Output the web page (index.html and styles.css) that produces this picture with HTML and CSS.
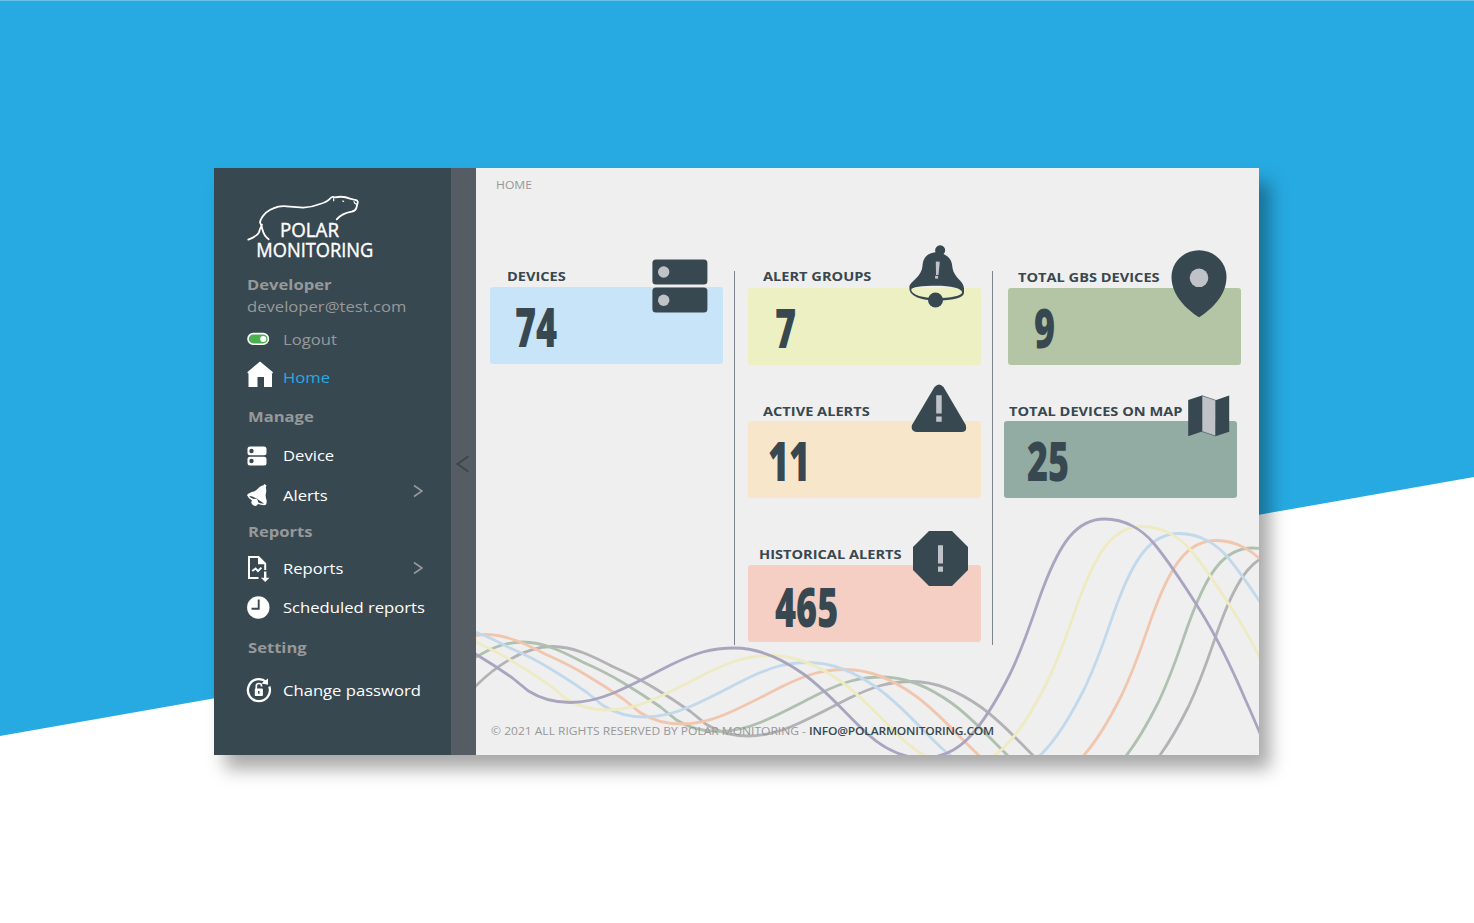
FILE: index.html
```html
<!DOCTYPE html>
<html lang="en">
<head>
<meta charset="utf-8">
<title>Polar Monitoring</title>
<link rel="stylesheet" href="styles.css">
</head>
<body>
<div class="window">
  <aside class="sidebar">
    <svg class="logo" viewBox="0 0 420 225" role="img" aria-label="Polar Monitoring">
      <g fill="none" stroke="#fff" stroke-width="5.4" stroke-linecap="round" stroke-linejoin="round">
        <path d="M25 149Q52 138 57 127Q60 115 66 104M86 148Q72 138 67 118Q66 108 60 97Q62 84 78 68Q90 58 100 55Q118 47 140 49L190 53Q215 52 240 42Q262 36 272 24Q276 18 285 22Q310 17 330 26L346 30Q355 32 353 38L349 54Q347 62 335 65Q306 70 290 88"/>
        <path d="M281 26l0 6M342 35q2 8 9 7M308 33l3 1" stroke-width="3.6"/>
      </g>
      <g class="logo-text" fill="#fff" stroke="#fff" stroke-width="1.2">
        <text x="120" y="141" textLength="177" lengthAdjust="spacingAndGlyphs">POLAR</text>
        <text x="49" y="202" textLength="351" lengthAdjust="spacingAndGlyphs">MONITORING</text>
      </g>
    </svg>
    <div class="row user"><span class="wide bold">Developer</span></div>
    <div class="row email"><span class="wide">developer@test.com</span></div>
    <nav>
      <a class="row logout"><i><svg width="24" height="14" viewBox="0 0 24 14"><rect x="1" y="1.6" width="20.4" height="10.6" rx="5.3" fill="#4caf50" stroke="#fff" stroke-width="1.6"/><circle cx="16.2" cy="6.9" r="3" fill="#fff"/></svg></i><span class="wide">Logout</span></a>
      <a class="row home"><i><svg width="27" height="28" viewBox="0 0 27 28"><path fill="#fff" d="M13 .5L26 11.2 25 13V26H17V16H10.500V26H1.500V13L.3 11.200z"/></svg></i><span class="wide">Home</span></a>
      <div class="row manage"><span class="wide bold">Manage</span></div>
      <a class="row device"><i><svg width="20" height="20" viewBox="0 0 20 20"><g fill="#fff"><rect x=".5" y=".5" width="19" height="8.800" rx="2.500"/><rect x=".5" y="10.700" width="19" height="8.800" rx="2.500"/></g><g fill="#384850"><circle cx="4.500" cy="5" r="2.200"/><circle cx="4.500" cy="15" r="2.200"/></g></svg></i><span class="wide">Device</span></a>
      <a class="row alerts"><i><svg width="22" height="22" viewBox="0 0 22 22"><path fill="#fff" d="M0 11Q2 8.500 7 7.500Q10 6 12 3.500Q14 1.500 16.500 1.300L17.500 0L19.500 1.500L18.800 3.500Q19.600 6 19 9Q18 12 19.600 16Q20 20 18.500 21Q15 21.500 11 20A3 3 0 1 1 5 16.500Q1 14 0 11z"/><path d="M2 12Q6 12 11 15.500Q16 18.500 17 19.700Q13 19.500 11 18.200Q10 15 7 15Q3 13.800 2 12z" fill="#384850"/><circle cx="8" cy="17.700" r="2.900" fill="#fff"/></svg></i><span class="wide">Alerts</span><svg class="chevron" width="10" height="14" viewBox="0 0 10 14"><path d="M1 1.500L9 7L1 12.500"/></svg></a>
      <div class="row reports-title"><span class="wide bold">Reports</span></div>
      <a class="row reports"><i><svg width="24" height="27" viewBox="0 0 24 27"><path d="M11.500 23H2V2H11.500L18.200 8.600V15" fill="none" stroke="#fff" stroke-width="2"/><path d="M11 1.200L19 9.200H11zM17 16.500h2.400v6.200h3.100L18.200 27 13.900 22.700H17z" fill="#fff"/><path d="M5.200 16L8.600 13.500 11 16.200 14.400 12.600" fill="none" stroke="#fff" stroke-width="1.900"/></svg></i><span class="wide">Reports</span><svg class="chevron" width="10" height="14" viewBox="0 0 10 14"><path d="M1 1.500L9 7L1 12.500"/></svg></a>
      <a class="row scheduled"><i><svg width="23" height="23" viewBox="0 0 23 23"><circle cx="11.300" cy="11.500" r="11.200" fill="#fff"/><path d="M11.700 3.500V12.800H4.500" fill="none" stroke="#384850" stroke-width="1.900"/></svg></i><span class="wide">Scheduled reports</span></a>
      <div class="row setting"><span class="wide bold">Setting</span></div>
      <a class="row password"><i><svg width="26" height="26" viewBox="0 0 26 26"><path d="M20.300 5A11 11 0 1 0 23.300 9.500" fill="none" stroke="#fff" stroke-width="2.300"/><path d="M22 1.500V7.700L15.300 6.600z" fill="#fff"/><rect x="8.800" y="11.600" width="8.100" height="7.500" rx=".8" fill="#fff"/><path d="M10.300 12V8.800Q10.300 6.500 12.900 6.500Q15.500 6.500 15.500 8.800V9.500" fill="none" stroke="#fff" stroke-width="1.700"/><path d="M12.800 14v2.700" stroke="#384850" stroke-width="1.500"/></svg></i><span class="wide">Change password</span></a>
    </nav>
  </aside>
  <div class="collapse"><svg width="14" height="18" viewBox="0 0 14 18"><path d="M12.500 1.300L1.500 9L12.500 16.700" fill="none" stroke="#384850" stroke-width="2"/></svg></div>
  <main class="main">
    <svg class="waves" viewBox="475.500 168 783.500 587" aria-hidden="true">
      <defs><path id="wave" d="M290 660C315 633 345 613 374 613C395 613 415 623 434 633Q457 643 475 654Q495 666 512 678L528 691C542 700 556 702.500 570 702.500C588 702.500 601 698 613 693C636 683 652 674 670 665C695 653 710 648 734 648C759 648 782 659 803 674C828 692 844 713 867 734C886 751 903 758 922 758C940 758 955 751 967 739C984 722 997 699 1010 673C1027 637 1034 610 1043 587C1059 545 1075 519 1104 519C1125 519 1142 530 1153 543C1172 566 1186 589 1200 611C1218 640 1233 672 1245 700C1251 713 1255 723 1262 739"/></defs>
      <g fill="none" stroke-width="2.800">
        <use href="#wave" x="178" y="33.500" stroke="#b3b3b7"/>
        <use href="#wave" x="148" y="29" stroke="#b0c0b0"/>
        <use href="#wave" x="111.500" y="21.500" stroke="#f1c6ae"/>
        <use href="#wave" x="74.500" y="14.500" stroke="#c2d9ec"/>
        <use href="#wave" x="37.500" y="7.500" stroke="#eeebc3"/>
        <use href="#wave" stroke="#a9a5bf"/>
      </g>
    </svg>
    <header class="crumb"><span>HOME</span></header>
    <section class="board">
      <div class="column">
        <article class="stat devices">
          <h2><span>DEVICES</span></h2>
          <div class="card blue"><strong>74</strong></div>
          <svg class="badge server" width="56" height="54" viewBox="0 0 56 54"><g fill="#384850"><rect x=".4" y=".4" width="55" height="25" rx="3.500"/><rect x=".4" y="28.500" width="55" height="25" rx="3.500"/></g><g fill="#bfc3c8"><circle cx="11.700" cy="13" r="5.700"/><circle cx="11.700" cy="41.200" r="5.700"/></g></svg>
        </article>
      </div>
      <div class="column">
        <article class="stat groups">
          <h2><span>ALERT GROUPS</span></h2>
          <div class="card yellow"><strong>7</strong></div>
          <svg class="badge bell" width="56" height="63" viewBox="0 0 56 63"><path fill="#384850" fill-rule="evenodd" d="M13.500 21C14 12 19 8 26.500 7.200A5 5 0 1 1 36 6.500Q35.800 7.800 34.500 9C41 12 43 16 43.500 23C45 33 55 36 55 43.500V48C54 53.500 43 55.500 27.500 55.500S1 51 .4 44V41C1.500 37 13 31 13.500 21zM2.200 44.700C3 50 14 53 27.500 53S53 51 53.200 47C52 43 42 40.700 27.500 40.700S2 42 2.200 44.700z"/><circle cx="26.500" cy="55" r="7.500" fill="#384850"/><path d="M26.800 16.500l4 .2-1.300 13.200h-2.500zM26.200 30.800l3 .3-.2 2.700-3-.2z" fill="#bfc3c8"/></svg>
        </article>
        <article class="stat active">
          <h2><span>ACTIVE ALERTS</span></h2>
          <div class="card sand"><strong>11</strong></div>
          <svg class="badge warn" width="56" height="49" viewBox="0 0 56 49"><path d="M23.500 3Q28 -2 32.500 3L54.500 40.500Q57 47.500 50.500 48H5.500Q-.5 47.500 1 41z" fill="#384850"/><path d="M25.200 11.200h5.500v18.300h-5.500zM25.200 32.500h5.500v5.300h-5.500z" fill="#bfc3c8"/></svg>
        </article>
        <article class="stat history">
          <h2><span>HISTORICAL ALERTS</span></h2>
          <div class="card rose"><strong>465</strong></div>
          <svg class="badge octagon" width="55" height="55" viewBox="0 0 55 55"><path d="M16 0H39L55 16V39L39 55H16L0 39V16z" fill="#384850"/><path d="M25 14.200h5v18.300h-5zM25 35.500h5v5.300h-5z" fill="#bfc3c8"/></svg>
        </article>
      </div>
      <div class="column">
        <article class="stat gbs">
          <h2><span>TOTAL GBS DEVICES</span></h2>
          <div class="card green"><strong>9</strong></div>
          <svg class="badge pin" width="56" height="68" viewBox="0 0 56 68"><path d="M28 .2C43 .2 55.500 12 55.500 27C55.500 45 41 59 28 67.300C15 59 .5 45 .5 27C.5 12 13 .2 28 .2z" fill="#384850"/><circle cx="28" cy="27.800" r="9.300" fill="#bfc3c8"/></svg>
        </article>
        <article class="stat onmap">
          <h2><span>TOTAL DEVICES ON MAP</span></h2>
          <div class="card teal"><strong>25</strong></div>
          <svg class="badge map" width="42" height="42" viewBox="0 0 42 42"><path d="M.2 5L14 .5V36.500L.2 41.200zM27.500 5.200L41.200 .5V36.800L27.500 41.200z" fill="#384850"/><path d="M14 .7L27.500 5.200V41L14 36.500z" fill="#bfc3c8" stroke="#384850" stroke-width=".6"/></svg>
        </article>
      </div>
    </section>
    <footer class="legal"><span>© 2021 ALL RIGHTS RESERVED BY POLAR MONITORING - <b>INFO@POLARMONITORING.COM</b></span></footer>
  </main>
</div>
</body>
</html>
```
FILE: styles.css
```css
* { box-sizing: border-box; }
body {
  position: relative;
  z-index: 0;
  margin: 0;
  width: 1474px;
  height: 923px;
  overflow: hidden;
  padding: 168px 0 0 214px;
  background: #fff;
  font-family: "Open Sans", "Noto Sans", sans-serif;
}
/* slanted blue backdrop */
body::before {
  content: "";
  position: absolute;
  z-index: -1;
  inset: 0;
  background: linear-gradient(#6bc3ea 0 1px, #27aae2 1px);
  clip-path: polygon(0 0, 100% 0, 100% 477px, 0 736px);
}
.window {
  display: flex;
  width: 1045px;
  height: 587px;
  box-shadow: 11px 14px 17px rgba(0, 0, 0, .34);
}
.sidebar {
  width: 237px;
  padding: 22px 0 0 33px;
  background: #384850;
  color: #fff;
  font-size: 14.4px;
}
.logo { display: block; width: 140px; height: 75px; margin-left: -7px; }
.logo-text { font-family: "Open Sans", "Noto Sans", sans-serif; font-size: 58px; font-weight: 500; }
.row { display: flex; align-items: center; height: 20px; position: relative; white-space: nowrap; }
.row i { width: 36px; display: flex; flex: none; }
.row i svg { display: block; flex: none; }
.wide { display: block; transform: scaleX(1.155); transform-origin: 0 50%; }
.bold { font-weight: 700; color: #97989a; font-size: 14.2px; transform: scaleX(1.17); }
.user { margin-top: 9px; }
.email { margin-top: 2px; color: #97989a; }
.logout { margin-top: 13px; color: #97989a; }
.home { margin-top: 18px; color: #27aae2; }
.home i svg { margin-top: -5px; }
.manage { margin-top: 19px; padding-left: 1px; }
.device { margin-top: 19px; }
.device i svg { margin-top: 2px; }
.alerts { margin-top: 20px; }
.reports-title { margin-top: 16px; padding-left: 1px; }
.reports { margin-top: 17px; }
.scheduled { margin-top: 19px; }
.scheduled i svg { margin-top: 1px; }
.setting { margin-top: 20px; padding-left: 1px; }
.password { margin-top: 23px; }
.password i svg { margin-left: -1px; }
.chevron { margin-left: auto; margin-right: 28px; fill: none; stroke: #97989a; stroke-width: 1.600; }
.alerts .chevron { margin-bottom: 9px; }
.collapse {
  width: 24.500px;
  display: flex;
  align-items: center;
  justify-content: center;
  padding-top: 5px;
  background: #555c64;
}
.main {
  position: relative;
  flex: 1;
  display: flex;
  flex-direction: column;
  background: #efefef;
  color: #384850;
  overflow: hidden;
}
.waves { position: absolute; inset: 0; width: 100%; height: 100%; }
.crumb { height: 103px; padding: 9px 0 0 20.500px; font-size: 11px; line-height: 16px; color: #97989a; }
.crumb span { display: inline-block; transform: scaleX(1.1); transform-origin: 0 50%; }
.board { position: relative; display: flex; height: 374px; padding-left: 14.500px; }
.column { width: 258px; }
.column + .column { border-left: 1px solid #7f858c; padding-left: 13px; }
.column:first-child { width: 244px; }
.stat { position: relative; width: 233px; }
.stat h2 {
  margin: 0 0 3px;
  height: 16px;
  padding-left: 15px;
  font-size: 12.700px;
  font-weight: 700;
  line-height: 16px;
  white-space: nowrap;
}
.stat h2 span { display: inline-block; transform: scaleX(1.15); transform-origin: 0 50%; }
.card { height: 77px; border-radius: 3px; padding-left: 25px; }
.card strong {
  display: inline-block;
  font-size: 54.500px;
  line-height: 79px;
  font-weight: 800;
  transform: scaleX(.66);
  transform-origin: 0 50%;
}
.blue { background: #c8e4f9; }
.yellow { background: #edf0c3; padding-left: 27px; }
.sand { background: #f7e6c9; padding-left: 20px; }
.rose { background: #f5cfc3; padding-left: 26.500px; }
.rose strong { line-height: 83px; }
.green { background: #b4c5a5; padding-left: 26px; }
.teal { background: #92aca3; padding-left: 23px; }
.devices { margin-top: -3px; }
.devices h2 { padding-left: 16.500px; margin-bottom: 2.500px; }
.groups { margin-top: -3px; }
.groups h2 { margin-bottom: 3.600px; }
.active { margin-top: 38.400px; }
.active h2, .onmap h2 { margin-bottom: 2.400px; }
.history { margin-top: 47.600px; }
.history h2 { padding-left: 11px; }
.gbs { margin: -2px 0 0 2px; }
.gbs h2 { padding-left: 10px; margin-bottom: 3.300px; }
.onmap { margin: 37.700px 0 0 -2px; }
.onmap h2 { padding-left: 4.500px; }
.badge { position: absolute; }
.server { left: 162px; top: -9px; }
.bell { left: 161px; top: -23px; }
.warn { left: 163px; top: -19px; }
.octagon { left: 165px; top: -15px; }
.pin { left: 163px; top: -19px; }
.map { left: 184px; top: -8px; }
.legal {
  position: relative;
  margin-top: auto;
  height: 32px;
  padding-left: 15px;
  font-size: 11px;
  line-height: 16px;
  color: #97989a;
  white-space: nowrap;
}
.legal span { display: inline-block; transform: scaleX(1.093); transform-origin: 0 50%; }
.legal b { font-weight: 600; color: #384850; letter-spacing: -.18px; }
```
